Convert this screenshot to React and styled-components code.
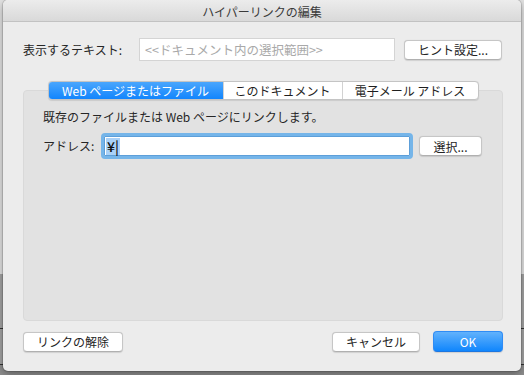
import React from "react";
import styled, { createGlobalStyle } from "styled-components";

const Global = createGlobalStyle`
  html, body { margin: 0; padding: 0; }
  body {
    width: 524px;
    height: 375px;
    overflow: hidden;
    font-family: "Noto Sans CJK JP", "Noto Sans", sans-serif;
    font-size: 12px;
    color: #262626;
    background: linear-gradient(to bottom, #e2e2e2 0, #e2e2e2 274px, #a3a3a3 274px, #a3a3a3 328px, #333 328px, #333 329px, #a3a3a3 329px, #a3a3a3 364px, #333 364px, #333 365px, #8f8f8f 365px);
  }
`;

const Desktop = styled.div`
  display: flex;
  padding-left: 3px;
`;

const Window = styled.div`
  width: 518px;
  height: 371px;
  background: #ececec;
  border-radius: 5px;
  box-shadow: 0 0 0 1px rgba(0,0,0,0.12), 0 3px 8px rgba(0,0,0,0.35);
  display: flex;
  flex-direction: column;
  overflow: hidden;
`;

const TitleBar = styled.div`
  height: 22px;
  box-sizing: border-box;
  border-bottom: 1px solid #c2c2c2;
  background: linear-gradient(to bottom, #ececec, #d9d9d9);
  display: flex;
  align-items: center;
  justify-content: center;
  font-size: 12px;
  color: #3a3a3a;
  padding-top: 1px;
`;

const Content = styled.div`
  padding: 16px 18px 0 20px;
  display: flex;
  flex-direction: column;
`;

const Row = styled.div`
  display: flex;
  align-items: center;
  height: ${p => p.$h}px;
`;

const Label = styled.div`
  width: ${p => p.$w}px;
  flex: none;
  line-height: 16px;
`;

const TextField = styled.div`
  box-sizing: border-box;
  width: ${p => p.$w}px;
  height: ${p => p.$h}px;
  background: #fff;
  border: 1px solid #d4d4d4;
  display: flex;
  align-items: center;
  padding-left: 5px;
  font-size: 12.5px;
  color: ${p => (p.$placeholder ? "#a9a9a9" : "#1a1a1a")};
  white-space: nowrap;
  overflow: hidden;
`;

const FocusField = styled.div`
  box-sizing: border-box;
  width: ${p => p.$w}px;
  height: ${p => p.$h}px;
  background: #fff;
  border: 3px solid #75b5e9;
  border-radius: 4px;
  box-shadow: inset 0 0 0 1px #5d9fd9;
  display: flex;
  align-items: center;
  padding-left: 2px;
  font-size: 14px;
  font-weight: 500;
  color: #111;
`;

const Selection = styled.span`
  background: #a9d1f8;
  line-height: 17px;
  padding: 0 1px;
`;

const Button = styled.button`
  box-sizing: border-box;
  width: ${p => p.$w}px;
  height: ${p => p.$h || 20}px;
  margin-left: ${p => p.$ml || 0}px;
  flex: none;
  border-radius: 4px;
  font-family: inherit;
  font-size: 12px;
  padding: 0;
  border: 1px solid ${p => (p.$primary ? "#2f8cf5" : "#c6c6c6")};
  border-bottom-color: ${p => (p.$primary ? "#1d76e0" : "#b0b0b0")};
  background: ${p => (p.$primary ? "linear-gradient(to bottom, #62b2fc, #1086fd)" : "#fff")};
  color: ${p => (p.$primary ? "#fff" : "#242424")};
  box-shadow: 0 0.5px 1px rgba(0,0,0,0.12);
  display: flex;
  align-items: center;
  justify-content: center;
`;

const TabBar = styled.div`
  align-self: center;
  margin-top: 20px;
  margin-bottom: -10px;
  position: relative;
  z-index: 1;
  display: flex;
  height: 19px;
  box-sizing: border-box;
  border: 1px solid #c4c4c4;
  border-radius: 4px;
  background: #fff;
  box-shadow: 0 0.5px 1px rgba(0,0,0,0.1);
  overflow: hidden;
`;

const Tab = styled.div`
  width: ${p => p.$w}px;
  box-sizing: border-box;
  display: flex;
  align-items: center;
  justify-content: center;
  white-space: nowrap;
  color: ${p => (p.$active ? "#fff" : "#1f1f1f")};
  background: ${p => (p.$active ? "linear-gradient(to bottom, #4aa6fd, #1285fd)" : "transparent")};
  border-left: ${p => (p.$first ? "none" : "1px solid #d2d2d2")};
`;

const Panel = styled.div`
  box-sizing: border-box;
  height: 231px;
  background: #e2e2e2;
  border: 1px solid #d9d9d9;
  border-radius: 4px;
  padding: 18px 19px 0 19px;
  display: flex;
  flex-direction: column;
`;

const Description = styled.div`
  line-height: 16px;
`;

const AddressRow = styled.div`
  display: flex;
  align-items: center;
  height: 26px;
  margin-top: 8px;
`;

const Footer = styled.div`
  display: flex;
  align-items: center;
  margin-top: 10px;
  height: 21px;
`;

const Spacer = styled.div`
  flex: 1;
`;

export default function App() {
  return (
    <>
      <Global />
      <Desktop>
        <Window>
          <TitleBar>ハイパーリンクの編集</TitleBar>
          <Content>
            <Row $h={23}>
              <Label $w={116}>表示するテキスト:</Label>
              <TextField $w={256} $h={23} $placeholder>
                &lt;&lt;ドキュメント内の選択範囲&gt;&gt;
              </TextField>
              <Button $w={98} $ml={9}>ヒント設定...</Button>
            </Row>
            <TabBar>
              <Tab $w={174} $active $first>Web ページまたはファイル</Tab>
              <Tab $w={119}>このドキュメント</Tab>
              <Tab $w={136}>電子メール アドレス</Tab>
            </TabBar>
            <Panel>
              <Description>既存のファイルまたは Web ページにリンクします。</Description>
              <AddressRow>
                <Label $w={58}>アドレス:</Label>
                <FocusField $w={312} $h={26}>
                  <Selection>¥|</Selection>
                </FocusField>
                <Button $w={63} $ml={6}>選択...</Button>
              </AddressRow>
            </Panel>
            <Footer>
              <Button $w={100}>リンクの解除</Button>
              <Spacer />
              <Button $w={88}>キャンセル</Button>
              <Button $w={70} $h={21} $ml={13} $primary>OK</Button>
            </Footer>
          </Content>
        </Window>
      </Desktop>
    </>
  );
}
